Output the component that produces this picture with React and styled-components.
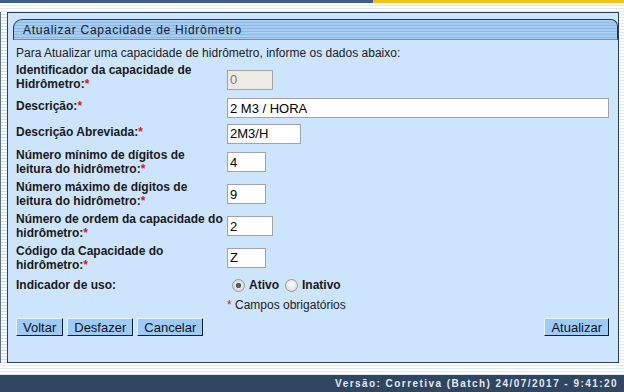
import React from 'react';
import styled, { createGlobalStyle } from 'styled-components';

const GlobalStyle = createGlobalStyle`
  * {
    margin: 0;
    padding: 0;
    box-sizing: border-box;
  }
  html, body {
    width: 624px;
    height: 392px;
    overflow: hidden;
  }
  body {
    font-family: "Liberation Sans", Arial, sans-serif;
    font-size: 12px;
    color: #000;
    background: repeating-linear-gradient(180deg, #ffffff 0 2px, #dfeaf6 2px 3px);
  }
`;

const Page = styled.div`
  display: flex;
  flex-direction: column;
  height: 392px;
`;

const TopBar = styled.div`
  display: flex;
  height: 3px;
`;

const TopSegment = styled.div`
  flex: ${(p) => p.$grow};
  background: ${(p) => p.$color};
`;

const Spacer = styled.div`
  height: ${(p) => p.$h}px;
`;

const MainRow = styled.div`
  display: flex;
  height: 351px;
`;

const SideMenu = styled.div`
  width: 7px;
  border-left: 1px solid #5a6f8a;
  background: repeating-linear-gradient(180deg, #ffffff 0 2px, #c9dcef 2px 3px);
`;

const Panel = styled.div`
  flex: 1;
  margin-right: 5px;
  border: 1px solid #2c3e55;
  background: #cce5fc;
  display: flex;
  flex-direction: column;
  padding: 6px 0 0 5px;
`;

const TitleTab = styled.div`
  height: 21px;
  border: 1px solid #243850;
  border-bottom-color: #6e92bb;
  border-radius: 9px 7px 0 0;
  background: repeating-linear-gradient(180deg, #a8cdf1 0 2px, #8bb8e5 2px 3px);
  display: flex;
  align-items: center;
  padding-left: 9px;
`;

const TitleText = styled.span`
  font-size: 12px;
  letter-spacing: 0.75px;
  color: #141c2a;
`;

const Content = styled.div`
  display: flex;
  flex-direction: column;
  padding: 0 9px 0 3px;
`;

const Intro = styled.p`
  margin-top: 6px;
  line-height: 14px;
  height: 15px;
  color: #222;
`;

const Row = styled.div`
  display: flex;
  align-items: center;
  height: ${(p) => p.$h}px;
`;

const Label = styled.div`
  width: 211px;
  font-weight: bold;
  line-height: 14px;
  color: #1a1a1a;
  margin-top: ${(p) => p.$shift || 0}px;
`;

const Line = styled.span`
  display: block;
  white-space: nowrap;
`;

const Req = styled.span`
  color: #e0141e;
`;

const Field = styled.input`
  width: ${(p) => p.$w}px;
  height: 20px;
  border: 1px solid #a3a3a3;
  padding: 0 2px;
  font-family: "Liberation Sans", Arial, sans-serif;
  font-size: 13px;
  color: #000;
  background: #fff;
  outline: none;
  margin-top: ${(p) => p.$shift || 0}px;

  &:disabled {
    background: #ebebe4;
    color: #7a7a7a;
  }
`;

const RadioGroup = styled.div`
  display: flex;
  align-items: center;
  padding-left: 5px;
`;

const RadioLabel = styled.label`
  display: flex;
  align-items: center;
  font-weight: bold;
  font-size: 12px;
  color: #1a1a1a;
  margin-right: ${(p) => p.$mr || 0}px;
`;

const Radio = styled.input.attrs({ type: 'radio' })`
  appearance: none;
  width: 13px;
  height: 13px;
  border-radius: 50%;
  border: 1px solid #9a9a9a;
  background: radial-gradient(circle at 50% 40%, #ffffff 0, #e6e6e6 55%, #cfcfcf 100%);
  margin-right: 4px;

  &:checked {
    background: radial-gradient(circle, #5c5c5c 0 2.4px, #e4e4e4 3px, #d2d2d2 100%);
  }
`;

const Note = styled.div`
  padding-left: 211px;
  font-size: 12px;
  color: #222;
`;

const Buttons = styled.div`
  display: flex;
  justify-content: space-between;
  margin-top: 5px;
`;

const ButtonGroup = styled.div`
  display: flex;
  gap: 4px;
`;

const Button = styled.button`
  height: 18px;
  padding: 0 6px;
  font-family: "Liberation Sans", Arial, sans-serif;
  font-size: 13px;
  color: #111;
  background: #9ccbf7;
  border: 1px solid;
  border-color: #e8f3ff #0d1e33 #0d1e33 #e8f3ff;
  cursor: pointer;
  line-height: 15px;
`;

const Footer = styled.div`
  height: 17px;
  background: #2e4660;
  display: flex;
  align-items: center;
  justify-content: flex-end;
  padding-right: 6px;
`;

const FooterText = styled.span`
  font-family: "Liberation Sans", Arial, sans-serif;
  font-weight: bold;
  font-size: 10px;
  letter-spacing: 1.45px;
  color: #e4e8ee;
`;

const fields = [
  { lines: ['Identificador da capacidade de', 'Hidrômetro:'], value: '0', w: 46, h: 32, disabled: true, shift: 3, lshift: -2 },
  { lines: ['Descrição:'], value: '2 M3 / HORA', w: 382, h: 26, shift: 2, lshift: -2 },
  { lines: ['Descrição Abreviada:'], value: '2M3/H', w: 74, h: 26, shift: 1, lshift: -2 },
  { lines: ['Número mínimo de dígitos de', 'leitura do hidrômetro:'], value: '4', w: 39, h: 32 },
  { lines: ['Número máximo de dígitos de', 'leitura do hidrômetro:'], value: '9', w: 39, h: 32 },
  { lines: ['Número de ordem da capacidade do', 'hidrômetro:'], value: '2', w: 46, h: 32 },
  { lines: ['Código da Capacidade do', 'hidrômetro:'], value: 'Z', w: 39, h: 31 },
];

const App = () => {
  return (
    <Page>
      <GlobalStyle />
      <TopBar>
        <TopSegment $grow="0 0 373px" $color="#3d5d8c" />
        <TopSegment $grow="1" $color="#f5c313" />
      </TopBar>
      <Spacer $h={9} />
      <MainRow>
        <SideMenu />
        <Panel>
          <TitleTab>
            <TitleText>Atualizar Capacidade de Hidrômetro</TitleText>
          </TitleTab>
          <Content>
            <Intro>Para Atualizar uma capacidade de hidrômetro, informe os dados abaixo:</Intro>
            <Spacer $h={1} />
            {fields.map((f) => (
              <Row key={f.lines.join(' ')} $h={f.h}>
                <Label $shift={f.lshift}>
                  {f.lines.map((line, i) => (
                    <Line key={line}>
                      {line}
                      {i === f.lines.length - 1 && <Req>*</Req>}
                    </Line>
                  ))}
                </Label>
                <Field $w={f.w} $shift={f.shift} defaultValue={f.value} disabled={f.disabled} />
              </Row>
            ))}
            <Row $h={24}>
              <Label>Indicador de uso:</Label>
              <RadioGroup>
                <RadioLabel $mr={6}>
                  <Radio name="uso" defaultChecked />
                  Ativo
                </RadioLabel>
                <RadioLabel>
                  <Radio name="uso" />
                  Inativo
                </RadioLabel>
              </RadioGroup>
            </Row>
            <Row $h={16}>
              <Note>
                <Req>*</Req> Campos obrigatórios
              </Note>
            </Row>
            <Buttons>
              <ButtonGroup>
                <Button type="button">Voltar</Button>
                <Button type="button">Desfazer</Button>
                <Button type="button">Cancelar</Button>
              </ButtonGroup>
              <Button type="button">Atualizar</Button>
            </Buttons>
          </Content>
        </Panel>
      </MainRow>
      <Spacer $h={12} />
      <Footer>
        <FooterText>Versão: Corretiva (Batch) 24/07/2017 - 9:41:20</FooterText>
      </Footer>
    </Page>
  );
};

export default App;
